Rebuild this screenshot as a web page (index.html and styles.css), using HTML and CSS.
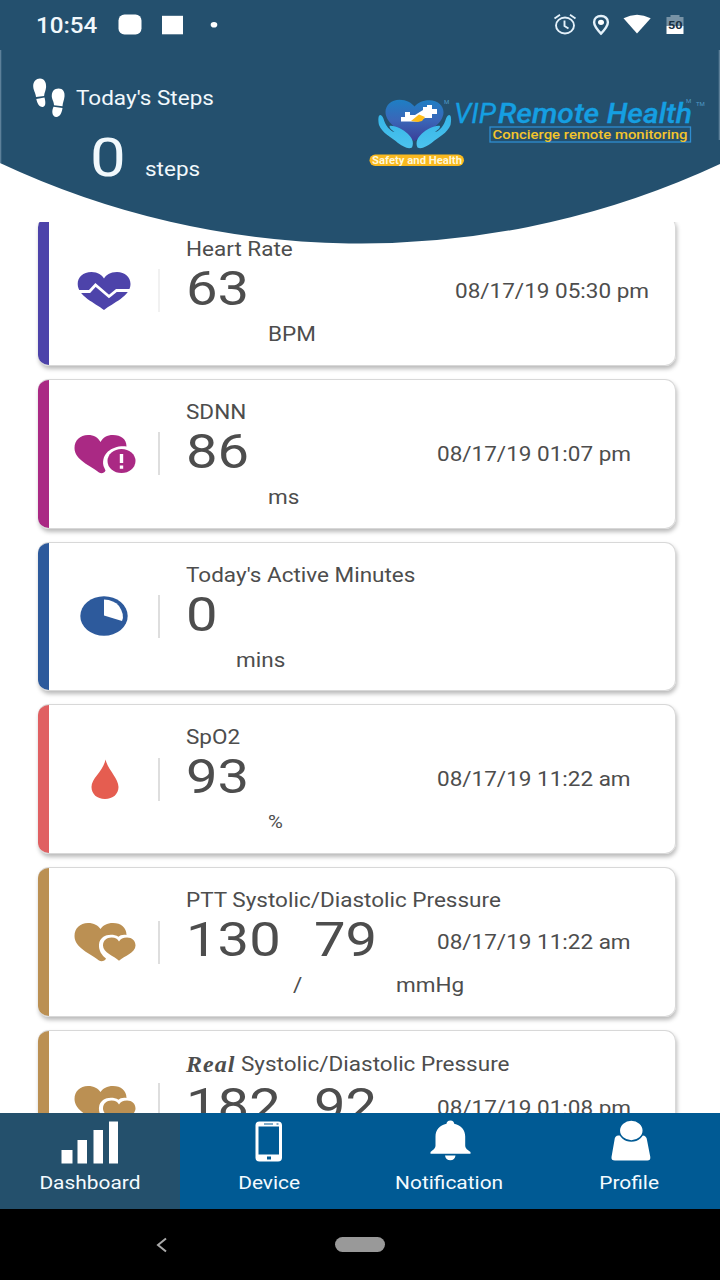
FILE: index.html
```html
<!DOCTYPE html>
<html lang="en">
<head>
<meta charset="utf-8">
<title>Dashboard</title>
<link rel="stylesheet" href="styles.css">
</head>
<body>
<div class="screen">
  <header class="header">
    <svg class="header-bg" width="720" height="246" viewBox="0 0 720 246">
      <path fill="#24506e" d="M0 0H720V164L700 173A850 850 0 0 1 0 163Z"/>
      <path fill="#5d8099" d="M0 50h1.3v113H0zM718.7 50h1.3v90h-1.3z"/>
    </svg>
    <div class="status">
      <span class="wide clock">10:54</span>
      <svg class="status-left" width="110" height="24" viewBox="0 0 110 24" fill="#fff">
        <rect x="0.500" y="1.500" width="23" height="20" rx="6"/>
        <rect x="44" y="2.800" width="21" height="18.500"/>
        <ellipse cx="96" cy="11.800" rx="3.300" ry="2.800"/>
      </svg>
      <svg class="status-right" width="134" height="24" viewBox="0 0 134 24">
        <g fill="none" stroke="#e4f1fa" stroke-width="1.900">
          <ellipse cx="12" cy="12.500" rx="9" ry="8"/>
          <path d="M1.500 5.500L7 1.800M22.500 5.500L17 1.800M11.500 7.500v5.500l4 2.500"/>
          <path stroke-width="2.400" d="M48 3c-4 0-6.900 2.600-6.900 6.200 0 4 6.900 11.400 6.900 11.400s6.900-7.400 6.900-11.400c0-3.600-2.900-6.200-6.900-6.200z"/>
        </g>
        <ellipse cx="48" cy="9.300" rx="3" ry="2.600" fill="#fff"/>
        <path fill="#fff" d="M70.500 5.300Q84 -2 97.700 5.300L84 20.600z"/>
        <path fill="#7893a6" d="M113.500 4h4V2h9v2h4v9h-17z"/>
        <path fill="#fff" d="M113.500 13h17v8h-17z"/>
        <text class="battery" x="115" y="16" textLength="14.500" lengthAdjust="spacingAndGlyphs">50</text>
      </svg>
    </div>
    <div class="summary">
      <div class="steps">
        <div class="steps-title">
          <svg width="34" height="40" viewBox="0 0 34 40" fill="#fff">
            <path d="M8 .5c4.500 0 6.400 4.200 6.100 8.500-.2 3.200-1.700 5.500-2 9L4 19C3.800 15 1 12 1.200 7.500 1.500 3.500 4 .5 8 .5zM4.300 21l8.200-1.400c1 3.500 1.800 9.200-1.700 9.400-4 .2-5.500-4-6.500-8z"/>
            <path d="M26.500 10.500c4.500 0 6.500 3.500 6 8-.4 4-1.800 6.200-2 9.800l-8.500-1c0-4-2.600-6.200-2.200-10.300.3-3.700 2.600-6.500 6.700-6.500zM21.500 28.800l9 1.300c-.5 4-2.200 8.900-6.200 8.900-4.500-.2-4.800-6-2.800-10.200z"/>
          </svg>
          <span class="wide">Today's Steps</span>
        </div>
        <div class="steps-value"><span class="wide count">0</span><span class="wide">steps</span></div>
      </div>
      <svg class="logo" width="340" height="76" viewBox="368 94 340 76">
        <defs>
          <linearGradient id="heart" x1="0" y1="0" x2="0" y2="1"><stop offset="0" stop-color="#1e7fc4"/><stop offset=".5" stop-color="#3a66b8"/><stop offset="1" stop-color="#3b3f99"/></linearGradient>
          <linearGradient id="hands" x1="0" y1="0" x2="0" y2="1"><stop offset="0" stop-color="#35b5e8"/><stop offset="1" stop-color="#4cc3ee"/></linearGradient>
        </defs>
        <path fill="url(#heart)" d="M414.500 141C403 133 385.500 124 385.500 112c0-7 6-12.300 14-12.300 7 0 12 3 15 6.800 3-3.800 8-6.300 15-6.300 8 0 14 5 14 12 0 12-17.500 20.800-29 28.800z"/>
        <path fill="#fff" d="M405 112h5v3h5l8-5v-3h4v-2h5v4h5v5h-5v4h-7l-8 3.500h-16v-4.500h4z"/>
        <path fill="#ffbd19" d="M411 121l8-6.500 6 2.500-3 4-4 1z"/>
        <path fill="url(#hands)" d="M380.500 115c4 1 2.500 9 10 15 1 1 3 2 4 2-2-2-5-3-5-6 5-1 14 4 18 7.500s7 8.500 4.500 14c-4 2-9-1-14-4.500-7-6-16-10-19-18-1-5-1-10 1.500-10zM449 115c-4 1-2.500 9-10 15-1 1-3 2-4 2 2-2 5-3 5-6-5-1-14 4-18 7.500s-7 8.500-4.500 14c4 2 9-1 14-4.500 7-6 16-10 19-18 1-5 1-10-1.500-10z"/>
        <rect x="369.500" y="154.500" width="94.500" height="11.500" rx="5.700" fill="#f9b91f"/>
        <g class="logo-text">
          <text class="tagline" x="372" y="164" textLength="90" lengthAdjust="spacingAndGlyphs">Safety and Health</text>
          <text class="brand thin" x="454" y="123" textLength="42" lengthAdjust="spacingAndGlyphs">VIP</text>
          <text class="brand" x="498" y="123" textLength="194" lengthAdjust="spacingAndGlyphs">Remote Health</text>
          <text class="mark" x="444" y="104">M</text>
          <text class="mark" x="686" y="103">M</text>
          <text class="mark" x="696" y="106">TM</text>
        </g>
        <rect x="490" y="127" width="200.500" height="15" fill="none" stroke="#2f8dd0" stroke-width="1.300"/>
        <text class="concierge" x="492.500" y="138.500" textLength="195" lengthAdjust="spacingAndGlyphs">Concierge remote monitoring</text>
      </svg>
    </div>
  </header>

  <main class="list">
    <article class="card violet">
      <div class="icon">
        <svg width="54" height="40" viewBox="0 0 54 40"><path fill="currentColor" d="M27 39C18 32 .7 25 .7 13 .7 6 6 1 14.500 1 21 1 25 4 27 7.500 29 4 33 1 40 1c8 0 13.500 5 13.500 12C53.500 25 36 32 27 39z"/><path d="M0 20.500H12.500L18.500 14 32 25.500 39.500 19.500H54" fill="none" stroke="#fff" stroke-width="2.800"/></svg>
      </div>
      <div class="rule faint"></div>
      <div class="body">
        <div class="wide label">Heart Rate</div>
        <div class="value"><span class="wide">63</span></div>
        <div class="unit"><span class="wide two">BPM</span></div>
      </div>
      <time class="wide date late">08/17/19 05:30 pm</time>
    </article>
    <article class="card magenta">
      <div class="icon">
        <svg width="62" height="40" viewBox="0 0 62 40"><path fill="currentColor" d="M25 38.500C17 32 .5 26 .5 14 .5 6.500 6 1 14 1c6 0 10 2.500 12.500 7C29 3.500 33 1 39 1c8 0 13.500 4 13.500 11.500C39 11 27 19 29.500 32l2 4.500c-1 2.500-4 3.500-6.500 2z"/><ellipse cx="47.500" cy="27" rx="14" ry="12" fill="currentColor"/><path stroke="#fff" stroke-width="3.400" d="M47.500 20v9M47.500 31.500v3.200"/></svg>
      </div>
      <div class="rule"></div>
      <div class="body">
        <div class="wide label">SDNN</div>
        <div class="value"><span class="wide">86</span></div>
        <div class="unit"><span class="wide two">ms</span></div>
      </div>
      <time class="wide date">08/17/19 01:07 pm</time>
    </article>
    <article class="card blue">
      <div class="icon">
        <svg width="50" height="40" viewBox="0 0 50 40"><ellipse cx="25" cy="20" rx="23.700" ry="19.700" fill="currentColor"/><path fill="#fff" d="M25 3.500V19.500L43 25Q46 19 40 10 35 4 25 3.500z"/></svg>
      </div>
      <div class="rule"></div>
      <div class="body">
        <div class="wide label">Today's Active Minutes</div>
        <div class="value"><span class="wide">0</span></div>
        <div class="unit"><span class="wide one">mins</span></div>
      </div>
    </article>
    <article class="card coral">
      <div class="icon">
        <svg width="30" height="41" viewBox="0 0 30 41"><path fill="#e55d50" d="M16.500 .500C19 11 29.500 19 29.500 28c0 7-5.500 12-13.500 12S2.500 35 2.500 28C2.500 19 14.500 12 16.500.5z"/></svg>
      </div>
      <div class="rule"></div>
      <div class="body">
        <div class="wide label">SpO2</div>
        <div class="value"><span class="wide">93</span></div>
        <div class="unit"><span class="wide two percent">%</span></div>
      </div>
      <time class="wide date">08/17/19 11:22 am</time>
    </article>
    <article class="card tan">
      <div class="icon">
        <svg width="62" height="40" viewBox="0 0 62 40"><path fill="currentColor" d="M25 38.500C17 32 .5 26 .5 14 .5 6.500 6 1 14 1c6 0 10 2.500 12.500 6C29 3.500 33 1 39 1c8 0 13.500 4.500 13.500 12-4-.5-6.500.3-8 1.800-7-4-18.500-2-19.500 7.700-.5 6 3 11 7 14-1 2.500-4.500 3.500-7 2z"/><path fill="currentColor" d="M45 38.800C40 34 29 30.500 29 23.500c0-5 3.500-8 8.500-8 4 0 6 1.500 7.500 4 1.500-2.500 4-4 8-4 5 0 8.500 3 8.500 8 0 7-11 10.500-16.500 15.300z"/></svg>
      </div>
      <div class="rule"></div>
      <div class="body">
        <div class="wide label">PTT Systolic/Diastolic Pressure</div>
        <div class="value"><span class="wide first">130</span><span class="wide">79</span></div>
        <div class="unit"><span class="wide slash">/</span><span class="wide">mmHg</span></div>
      </div>
      <time class="wide date">08/17/19 11:22 am</time>
    </article>
    <article class="card tan last">
      <div class="icon">
        <svg width="62" height="40" viewBox="0 0 62 40"><path fill="currentColor" d="M25 38.500C17 32 .5 26 .5 14 .5 6.500 6 1 14 1c6 0 10 2.500 12.500 6C29 3.500 33 1 39 1c8 0 13.500 4.500 13.500 12-4-.5-6.500.3-8 1.800-7-4-18.500-2-19.500 7.700-.5 6 3 11 7 14-1 2.500-4.500 3.500-7 2z"/><path fill="currentColor" d="M45 38.800C40 34 29 30.500 29 23.500c0-5 3.500-8 8.500-8 4 0 6 1.500 7.500 4 1.500-2.500 4-4 8-4 5 0 8.500 3 8.500 8 0 7-11 10.500-16.500 15.300z"/></svg>
      </div>
      <div class="rule"></div>
      <div class="body">
        <div class="label real"><em>Real</em><span class="wide">Systolic/Diastolic Pressure</span></div>
        <div class="value"><span class="wide first">182</span><span class="wide">92</span></div>
        <div class="unit"><span class="wide slash">/</span><span class="wide">mmHg</span></div>
      </div>
      <time class="wide date">08/17/19 01:08 pm</time>
    </article>
  </main>

  <nav class="tabs">
    <a class="tab active">
      <svg width="60" height="46" viewBox="0 0 60 46" fill="#fff"><path d="M1.500 31h11v13.500h-11zM17.500 21H27v23.500h-9.500zM33.500 11H43v33.500h-9.500zM49 2.500h9v42h-9z"/></svg>
      <span class="wide">Dashboard</span>
    </a>
    <a class="tab">
      <svg width="30" height="46" viewBox="0 0 30 46"><rect x="0.500" y="2.500" width="26.500" height="40" rx="4" fill="#fff"/><path fill="#005a94" d="M3.500 7.500h20.500v28H3.500zM9 4.500h9v1H9zM21.500 4.500h2v1h-2zM12 37.500h4v3h-4z"/></svg>
      <span class="wide">Device</span>
    </a>
    <a class="tab">
      <svg width="42" height="46" viewBox="0 0 42 46" fill="#fff"><path d="M21.500 1.500c2.500 0 3.500 1.500 3.700 3.300 7 1.500 11 6.500 11 12.700v9c0 3 2.500 4.500 5.300 6.500v1.800H1.500V33C4 31 6.500 29.500 6.500 26.500v-9c0-6.200 4-11.200 11-12.700.2-1.800 1.300-3.300 4-3.300zM16 36.500h10.500c-.3 3-2.200 4.700-5.200 4.700S16.400 39.500 16 36.500z"/></svg>
      <span class="wide">Notification</span>
    </a>
    <a class="tab">
      <svg width="42" height="46" viewBox="0 0 42 46" fill="#fff"><path d="M5.500 21q.3-4.500 4-4.500h24q4 0 4.500 4.500l3.300 17q.4 3.500-3 3.500H6q-4 0-3.500-3.500z"/><ellipse cx="22.300" cy="11.500" rx="12" ry="10.500" stroke="#005a94" stroke-width="1.500"/></svg>
      <span class="wide">Profile</span>
    </a>
  </nav>
  <footer class="system">
    <svg class="back" width="14" height="16" viewBox="0 0 14 16"><path d="M12 1.500L4 8l8 6.500" fill="none" stroke="#aaa" stroke-width="2"/></svg>
    <div class="pill"></div>
  </footer>
</div>
</body>
</html>
```
FILE: styles.css
```css
body {
  margin: 0;
  background: #fff;
  font-family: Roboto, "Noto Sans", sans-serif;
  color: #4d4d4d;
}

.screen {
  display: flex;
  flex-direction: column;
  width: 720px;
  height: 1280px;
  overflow: hidden;
}

.wide {
  display: inline-block;
  transform: scaleX(1.125);
  transform-origin: left center;
  white-space: nowrap;
}

.header {
  position: relative;
  z-index: 1;
  flex: none;
  height: 222px;
  color: #f1f8fc;
}

.header-bg {
  position: absolute;
  top: 0;
  left: 0;
}

.status {
  position: relative;
  display: flex;
  align-items: center;
  height: 24px;
  padding: 13px 33px 0 36px;
}

.clock {
  width: 82px;
  font-size: 21.5px;
  font-weight: 500;
}

.status-right {
  margin-left: auto;
}

.battery {
  font: 700 10px Roboto, sans-serif;
  fill: #152f42;
}

.summary {
  position: relative;
  display: flex;
  justify-content: space-between;
  padding: 40px 12px 0 32px;
  font-size: 20px;
}

.steps-title {
  display: flex;
  align-items: center;
  gap: 10px;
  height: 42px;
}

.steps-value {
  display: flex;
  align-items: baseline;
  padding: 7px 0 0 58px;
}

.count {
  width: 54.5px;
  font-size: 54px;
  line-height: 64px;
  transform: scaleX(1.18);
}

.logo {
  margin-top: 17px;
}

.brand {
  font: italic 500 27px Roboto, sans-serif;
  fill: #159fe2;
  stroke: #159fe2;
  stroke-width: .3px;
}

.brand.thin {
  font-weight: 400;
}

.tagline {
  font: 700 10px Roboto, sans-serif;
  fill: #fff7d6;
}

.mark {
  font: 6px Roboto, sans-serif;
  fill: #4f9ac6;
}

.concierge {
  font: 500 12.5px Roboto, sans-serif;
  fill: #f4c52c;
}

.list {
  flex: none;
  height: 891px;
  overflow: hidden;
}

.card {
  display: flex;
  position: relative;
  box-sizing: border-box;
  width: 638px;
  height: 149.8px;
  margin: 0 0 13px 38px;
  border: 1px solid #d8d8d8;
  border-left: 0;
  border-radius: 11px;
  background: linear-gradient(to right, currentColor 11px, #fff 11px);
  box-shadow: 1px 3px 4px rgba(0, 0, 0, .27);
}

.card:first-child {
  margin-top: -6px;
}

.violet { color: #4d43aa; }
.magenta { color: #aa2984; }
.blue { color: #2d5a9c; }
.coral { color: #e06062; }
.tan { color: #bb9053; }

.icon {
  display: flex;
  box-sizing: border-box;
  align-items: center;
  justify-content: center;
  width: 120px;
  padding-left: 11px;
}

.icon svg {
  display: block;
}

.magenta .icon,
.tan .icon {
  padding-left: 13px;
}

.rule {
  align-self: center;
  width: 2px;
  height: 43px;
  background: #dedede;
}

.rule.faint {
  background: #f1f1f1;
}

.body {
  width: 251px;
  padding: 20px 0 0 26px;
  color: #4d4d4d;
}

.label {
  display: block;
  height: 26px;
  font-size: 20px;
  line-height: 24px;
}

.value {
  display: flex;
  height: 58px;
  margin-top: 1px;
  font-size: 48px;
  line-height: 50px;
}

.value .wide {
  transform: scaleX(1.17);
}

.first {
  width: 128px;
}

.unit {
  display: flex;
  height: 24px;
  font-size: 20px;
  line-height: 24px;
}

.one { margin-left: 50px; }
.two { margin-left: 82px; }
.percent { font-size: 18px; }

.slash {
  width: 103px;
  flex: none;
  margin-left: 107px;
}

.date {
  align-self: center;
  color: #4d4d4d;
  font-size: 20px;
  line-height: 24px;
}

.date.late {
  margin-left: 18px;
}

.real {
  display: flex;
}

.real em {
  flex: none;
  width: 55px;
  font-family: "Liberation Serif", serif;
  font-size: 24px;
  font-weight: 700;
  letter-spacing: 1px;
}

.last .body {
  padding-top: 21px;
}

.last .value {
  padding-top: 2px;
}

.last .date {
  padding-top: 6px;
}

.tabs {
  position: relative;
  display: flex;
  flex: none;
  height: 96px;
  background: #005a94;
  color: #f4fbff;
}

.tab {
  display: flex;
  flex: 1;
  flex-direction: column;
  align-items: center;
  padding-top: 6px;
  font-size: 19px;
  line-height: 24px;
}

.tab svg {
  display: block;
  margin-bottom: 6px;
}

.tab .wide {
  margin-right: 1px;
  transform: scaleX(1.1);
  transform-origin: center;
}

.tab.active {
  background: #24506c;
}

.system {
  display: flex;
  align-items: center;
  flex: 1;
  background: #000;
}

.back {
  margin-left: 154px;
}

.pill {
  width: 50px;
  height: 15px;
  margin-left: 167px;
  border-radius: 8px;
  background: #999;
}
```
